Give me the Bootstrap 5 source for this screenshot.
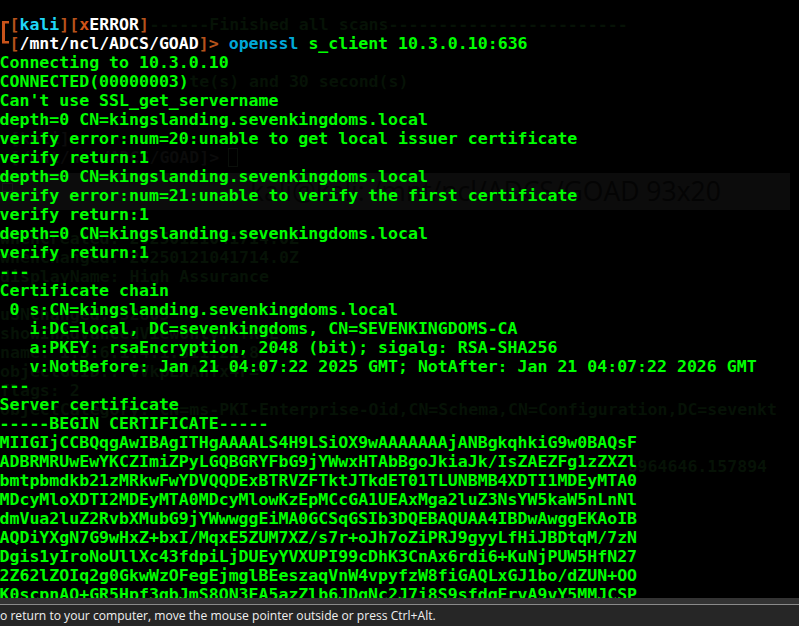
<!DOCTYPE html>
<html lang="en">
<head>
<meta charset="utf-8">
<title>openssl s_client</title>
<link href="https://cdn.jsdelivr.net/npm/bootstrap@5.3.0/dist/css/bootstrap.min.css" rel="stylesheet">
<style>
html,body{height:626px;overflow:hidden;background:#000}
.term-shell{height:626px}
.term-view{min-height:0;background:#000}
.term-text,.ghost-text{font-family:"DejaVu Sans Mono",monospace;font-weight:700;font-size:16.56px;line-height:19px;margin:0;white-space:pre;overflow:visible;color:#00ff00}
.term-text{padding-top:15px;margin-left:-.5px;z-index:1}
.ghost-layer{inset:0;padding-top:15px;z-index:0}
.ghost-text{color:#061206}
.ghost-low{margin-top:18.5px}
.ghost-band{height:37px;margin-top:6px;margin-right:9px;background:#0c0c0c;color:#040404;font-family:"Open Sans",sans-serif;font-size:26.5px;line-height:37px;white-space:pre;padding-left:250px}
.ghost-icon{left:2px;top:183px;width:11px;height:9px;border:1px solid #161616}
.ghost-cursor{left:228px;top:148px;width:10px;height:19px;border:1px solid #0a0f0a}
.corner-glyph{left:2px;top:21px;z-index:1}
.c-br{color:#b5521b}
.c-host{color:#1fd6f7}
.c-x{color:#cf5318}
.c-wht{color:#fff}
.c-cmd{color:#00a8d8}
.ghost-dim{color:#0b0b0b}
.status-bar{flex:0 0 27px;background:#262626;border-top:6px solid #333;box-shadow:inset 0 1px 0 #8a8a8a;color:#f0f0f0;font-family:"Open Sans",sans-serif;font-size:12.1px;line-height:20px;padding-top:2px}
</style>
</head>
<body>
<div class="term-shell d-flex flex-column overflow-hidden">
  <div class="term-view position-relative flex-grow-1 overflow-hidden">
    <div class="ghost-layer position-absolute">
      <pre class="ghost-text">               ------Finished all scans------------------------


                   te(s) and 30 second(s)


 <span class="ghost-dim">[kali]</span>
 <span class="ghost-dim">[/mnt/ncl/ADCS/GOAD]&gt;</span></pre>
      <div class="ghost-band">kali@kali: /mnt/ncl/ADCS/GOAD 93x20</div>
      <pre class="ghost-text ghost-low">whenCreated: 20250121041714.0Z
whenChanged: 20250121041714.0Z
displayName: High Assurance

uSNChanged: 32805
showInAdvancedViewOnly: TRUE
name: 1.3.6.1.4.1.311.21.8
objectGUID:: vVkpEXAhYx4r=
flags: 2
objectCategory: CN=ms-PKI-Enterprise-Oid,CN=Schema,CN=Configuration,DC=sevenkt


                                                               6964646.157894</pre>
      <div class="ghost-icon position-absolute"></div>
      <div class="ghost-cursor position-absolute"></div>
    </div>
    <svg class="corner-glyph position-absolute" width="8" height="23" viewBox="0 0 8 23" aria-hidden="true"><path d="M0 0H7V2.5H3V20H7V22.5H0Z" fill="#c9531a"/></svg>
    <pre class="term-text position-relative"> <span class="c-br">[</span><span class="c-host">kali</span><span class="c-br">][</span><span class="c-x">x</span><span class="c-wht">ERROR</span><span class="c-br">]</span>
 <span class="c-br">[</span><span class="c-wht">/mnt/ncl/ADCS/GOAD</span><span class="c-br">]&gt;</span> <span class="c-cmd">openssl</span> s_client 10.3.0.10:636
Connecting to 10.3.0.10
CONNECTED(00000003)
Can't use SSL_get_servername
depth=0 CN=kingslanding.sevenkingdoms.local
verify error:num=20:unable to get local issuer certificate
verify return:1
depth=0 CN=kingslanding.sevenkingdoms.local
verify error:num=21:unable to verify the first certificate
verify return:1
depth=0 CN=kingslanding.sevenkingdoms.local
verify return:1
---
Certificate chain
 0 s:CN=kingslanding.sevenkingdoms.local
   i:DC=local, DC=sevenkingdoms, CN=SEVENKINGDOMS-CA
   a:PKEY: rsaEncryption, 2048 (bit); sigalg: RSA-SHA256
   v:NotBefore: Jan 21 04:07:22 2025 GMT; NotAfter: Jan 21 04:07:22 2026 GMT
---
Server certificate
-----BEGIN CERTIFICATE-----
MIIGIjCCBQqgAwIBAgITHgAAAALS4H9LSiOX9wAAAAAAAjANBgkqhkiG9w0BAQsF
ADBRMRUwEwYKCZImiZPyLGQBGRYFbG9jYWwxHTAbBgoJkiaJk/IsZAEZFg1zZXZl
bmtpbmdkb21zMRkwFwYDVQQDExBTRVZFTktJTkdET01TLUNBMB4XDTI1MDEyMTA0
MDcyMloXDTI2MDEyMTA0MDcyMlowKzEpMCcGA1UEAxMga2luZ3NsYW5kaW5nLnNl
dmVua2luZ2RvbXMubG9jYWwwggEiMA0GCSqGSIb3DQEBAQUAA4IBDwAwggEKAoIB
AQDiYXgN7G9wHxZ+bxI/MqxE5ZUM7XZ/s7r+oJh7oZiPRJ9gyyLfHiJBDtqM/7zN
Dgis1yIroNoUllXc43fdpiLjDUEyYVXUPI99cDhK3CnAx6rdi6+KuNjPUW5HfN27
2Z62lZOIq2g0GkwWzOFegEjmglBEeszaqVnW4vpyfzW8fiGAQLxGJ1bo/dZUN+OO
K0scpnAO+GR5Hpf3qbJmS8ON3EA5azZlb6JDqNc2J7i8S9sfdgErvA9vY5MMJCSP</pre>
  </div>
  <div class="status-bar">o return to your computer, move the mouse pointer outside or press Ctrl+Alt.</div>
</div>
<script src="https://cdn.jsdelivr.net/npm/bootstrap@5.3.0/dist/js/bootstrap.bundle.min.js"></script>
</body>
</html>
